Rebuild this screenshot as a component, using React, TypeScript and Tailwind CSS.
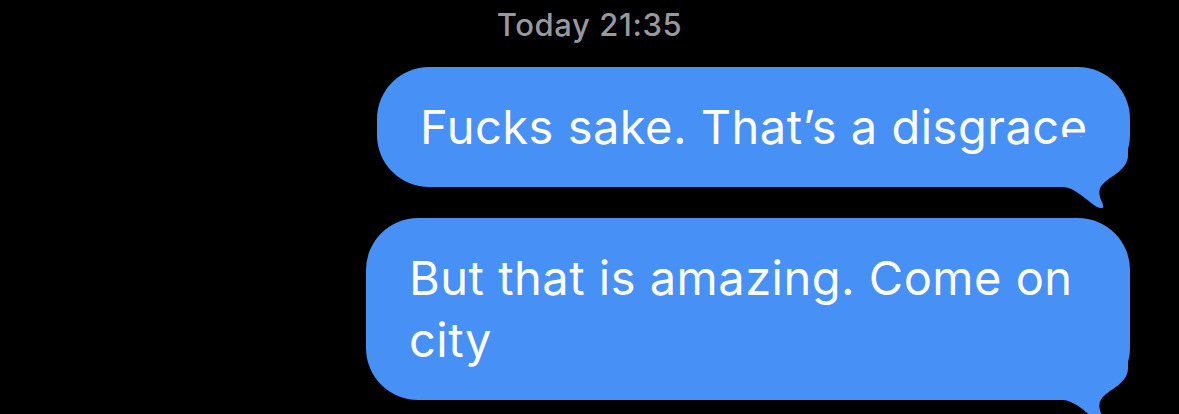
const BLUE = "#4790f5";

function Tail() {
  return (
    <svg
      className="absolute right-0 bottom-[-22px]"
      width="72"
      height="72"
      viewBox="0 0 72 72"
      fill={BLUE}
    >
      <path d="M0,0 H70 V18 C70,32 55,38 47,45 C41,50 40,55 43,63 Q46,69 45,70.5 Q43,72 38,69.5 C28,63 18,51 5,50 H0 Z" />
    </svg>
  );
}

type BubbleProps = {
  text: string;
  width: string;
};

function Bubble({ text, width }: BubbleProps) {
  return (
    <div className={`relative ${width}`}>
      <div className="rounded-[52px] bg-[#4790f5] py-[29px] pl-[43px] pr-[36px] text-[47px] leading-[62px] tracking-[0.5px] text-white">
        {text}
      </div>
      <Tail />
    </div>
  );
}

export default function App() {
  return (
    <div
      className="flex h-[414px] flex-col overflow-hidden bg-black"
      style={{ fontFamily: "Inter, 'Liberation Sans', sans-serif" }}
    >
      <div className="pt-[5px] text-center text-[31px] leading-[40px] font-medium tracking-[0.6px] text-[#98989d]">
        Today 21:35
      </div>
      <div className="mt-[22px] flex flex-col items-end gap-[31px] pr-[49px]">
        <Bubble text="Fucks sake. That’s a disgrace" width="w-[753px]" />
        <Bubble text="But that is amazing. Come on city" width="w-[764px]" />
      </div>
    </div>
  );
}
